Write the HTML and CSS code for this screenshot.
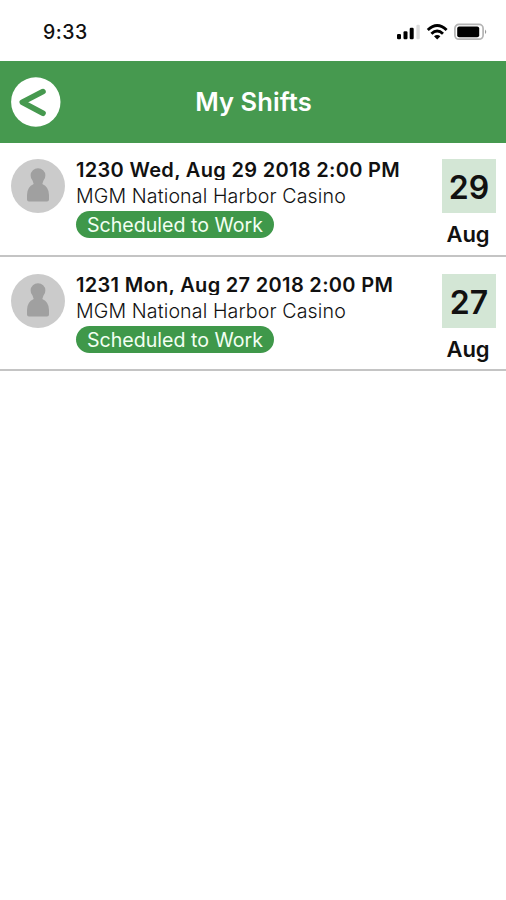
FILE: index.html
```html
<!DOCTYPE html>
<html lang="en">
<head>
<meta charset="utf-8">
<title>My Shifts</title>
<link rel="stylesheet" href="styles.css">
</head>
<body>
<div class="status">
  <span class="time">9:33</span>
  <svg class="status-icons" width="92" height="20" viewBox="0 0 92 20">
    <rect x="1" y="11.9" width="4" height="5.3" rx="1.2"/>
    <rect x="7.5" y="9.2" width="4" height="8" rx="1.2"/>
    <rect x="13.7" y="5.7" width="4" height="11.5" rx="1.2"/>
    <rect x="20.4" y="2.7" width="3.4" height="14.5" rx="1.2" fill="#ddd"/>
    <g fill="none" stroke="#000" stroke-width="2.9">
      <path d="M31.8 8Q41.2-.8 50.6 8"/>
      <path d="M35.4 11.8Q41.2 6.4 47 11.8"/>
    </g>
    <path d="M38 14.2Q41.2 11.8 44.4 14.2L41.2 17.4Z"/>
    <rect x="58.9" y="2.4" width="28.2" height="14.8" rx="4" fill="none" stroke="#b4b4b4" stroke-width="1.7"/>
    <rect x="61.2" y="4.5" width="22" height="10.7" rx="2"/>
    <path d="M89 7.5Q91.5 9.8 89 12Z" fill="#999"/>
  </svg>
</div>
<header class="header">
  <svg class="back" width="50" height="50" viewBox="0 0 50 50">
    <circle cx="24.8" cy="25" r="24.7" fill="#fff"/>
    <path d="M32 14.6L11.3 25.2L32 36.3" fill="none" stroke="#46994f" stroke-width="5.6" stroke-linecap="round" stroke-linejoin="round"/>
  </svg>
  <h1 class="title">My Shifts</h1>
</header>
<main>
  <article class="shift">
    <svg class="avatar" width="54" height="54" viewBox="0 0 54 54">
      <circle cx="27" cy="27" r="27" fill="#cbcbcb"/>
      <path d="M21.5 21.5A7.4 7.4 0 1 1 32.5 21.5L31.3 25Q38 28 38 36V40.5Q38 42.5 36 42.5H18Q16 42.5 16 40.5V36Q16 28 22.7 25Z" fill="#a0a0a0"/>
    </svg>
    <div class="info">
      <div class="when">1230 Wed, Aug 29 2018 2:00 PM</div>
      <div class="place">MGM National Harbor Casino</div>
      <div class="badge">Scheduled to Work</div>
    </div>
    <div class="date"><div class="day">29</div><div class="month">Aug</div></div>
  </article>
  <article class="shift">
    <svg class="avatar" width="54" height="54" viewBox="0 0 54 54">
      <circle cx="27" cy="27" r="27" fill="#cbcbcb"/>
      <path d="M21.5 21.5A7.4 7.4 0 1 1 32.5 21.5L31.3 25Q38 28 38 36V40.5Q38 42.5 36 42.5H18Q16 42.5 16 40.5V36Q16 28 22.7 25Z" fill="#a0a0a0"/>
    </svg>
    <div class="info">
      <div class="when">1231 Mon, Aug 27 2018 2:00 PM</div>
      <div class="place">MGM National Harbor Casino</div>
      <div class="badge">Scheduled to Work</div>
    </div>
    <div class="date"><div class="day">27</div><div class="month">Aug</div></div>
  </article>
</main>
</body>
</html>
```
FILE: styles.css
```css
* { box-sizing: border-box; }
body {
  margin: 0;
  background: #fff;
  color: #111;
  font-family: Inter, "Liberation Sans", sans-serif;
}
.status {
  display: flex;
  justify-content: space-between;
  height: 61px;
  padding: 22px 18px 0 43px;
}
.time { font-size: 19.5px; line-height: 20px; font-weight: 500; letter-spacing: .5px; }
.header {
  display: grid;
  grid-template-columns: 50px 1fr 50px;
  align-items: center;
  height: 82px;
  padding: 0 10px 0 11px;
  background: #46994f;
}
.title {
  margin: 0;
  color: #fff;
  font-size: 25.5px;
  line-height: 30px;
  font-weight: 600;
  letter-spacing: .1px;
  text-align: center;
}
.shift {
  display: flex;
  height: 114px;
  padding: 16px 10px 0 11px;
  border-bottom: 2px solid #c4c4c4;
}
.shift + .shift { padding-top: 17px; }
.avatar { flex: none; }
.info { flex: 1; margin-left: 11px; white-space: nowrap; }
.when {
  height: 21px;
  overflow: hidden;
  font-size: 20px;
  line-height: 23px;
  font-weight: 600;
  letter-spacing: .32px;
}
.place {
  height: 31px;
  font-size: 19.6px;
  line-height: 32px;
  font-weight: 300;
  letter-spacing: .12px;
}
.badge {
  width: 198px;
  height: 27px;
  border-radius: 14px;
  background: #3f984a;
  color: #f2fff2;
  font-size: 19.6px;
  line-height: 29px;
  text-align: center;
}
.date { width: 54px; text-align: center; }
.day {
  height: 54px;
  background: #d3e6d5;
  font-size: 32px;
  line-height: 57px;
  font-weight: 600;
}
.month {
  margin-left: -2px;
  font-size: 22px;
  line-height: 43px;
  font-weight: 600;
}
```
